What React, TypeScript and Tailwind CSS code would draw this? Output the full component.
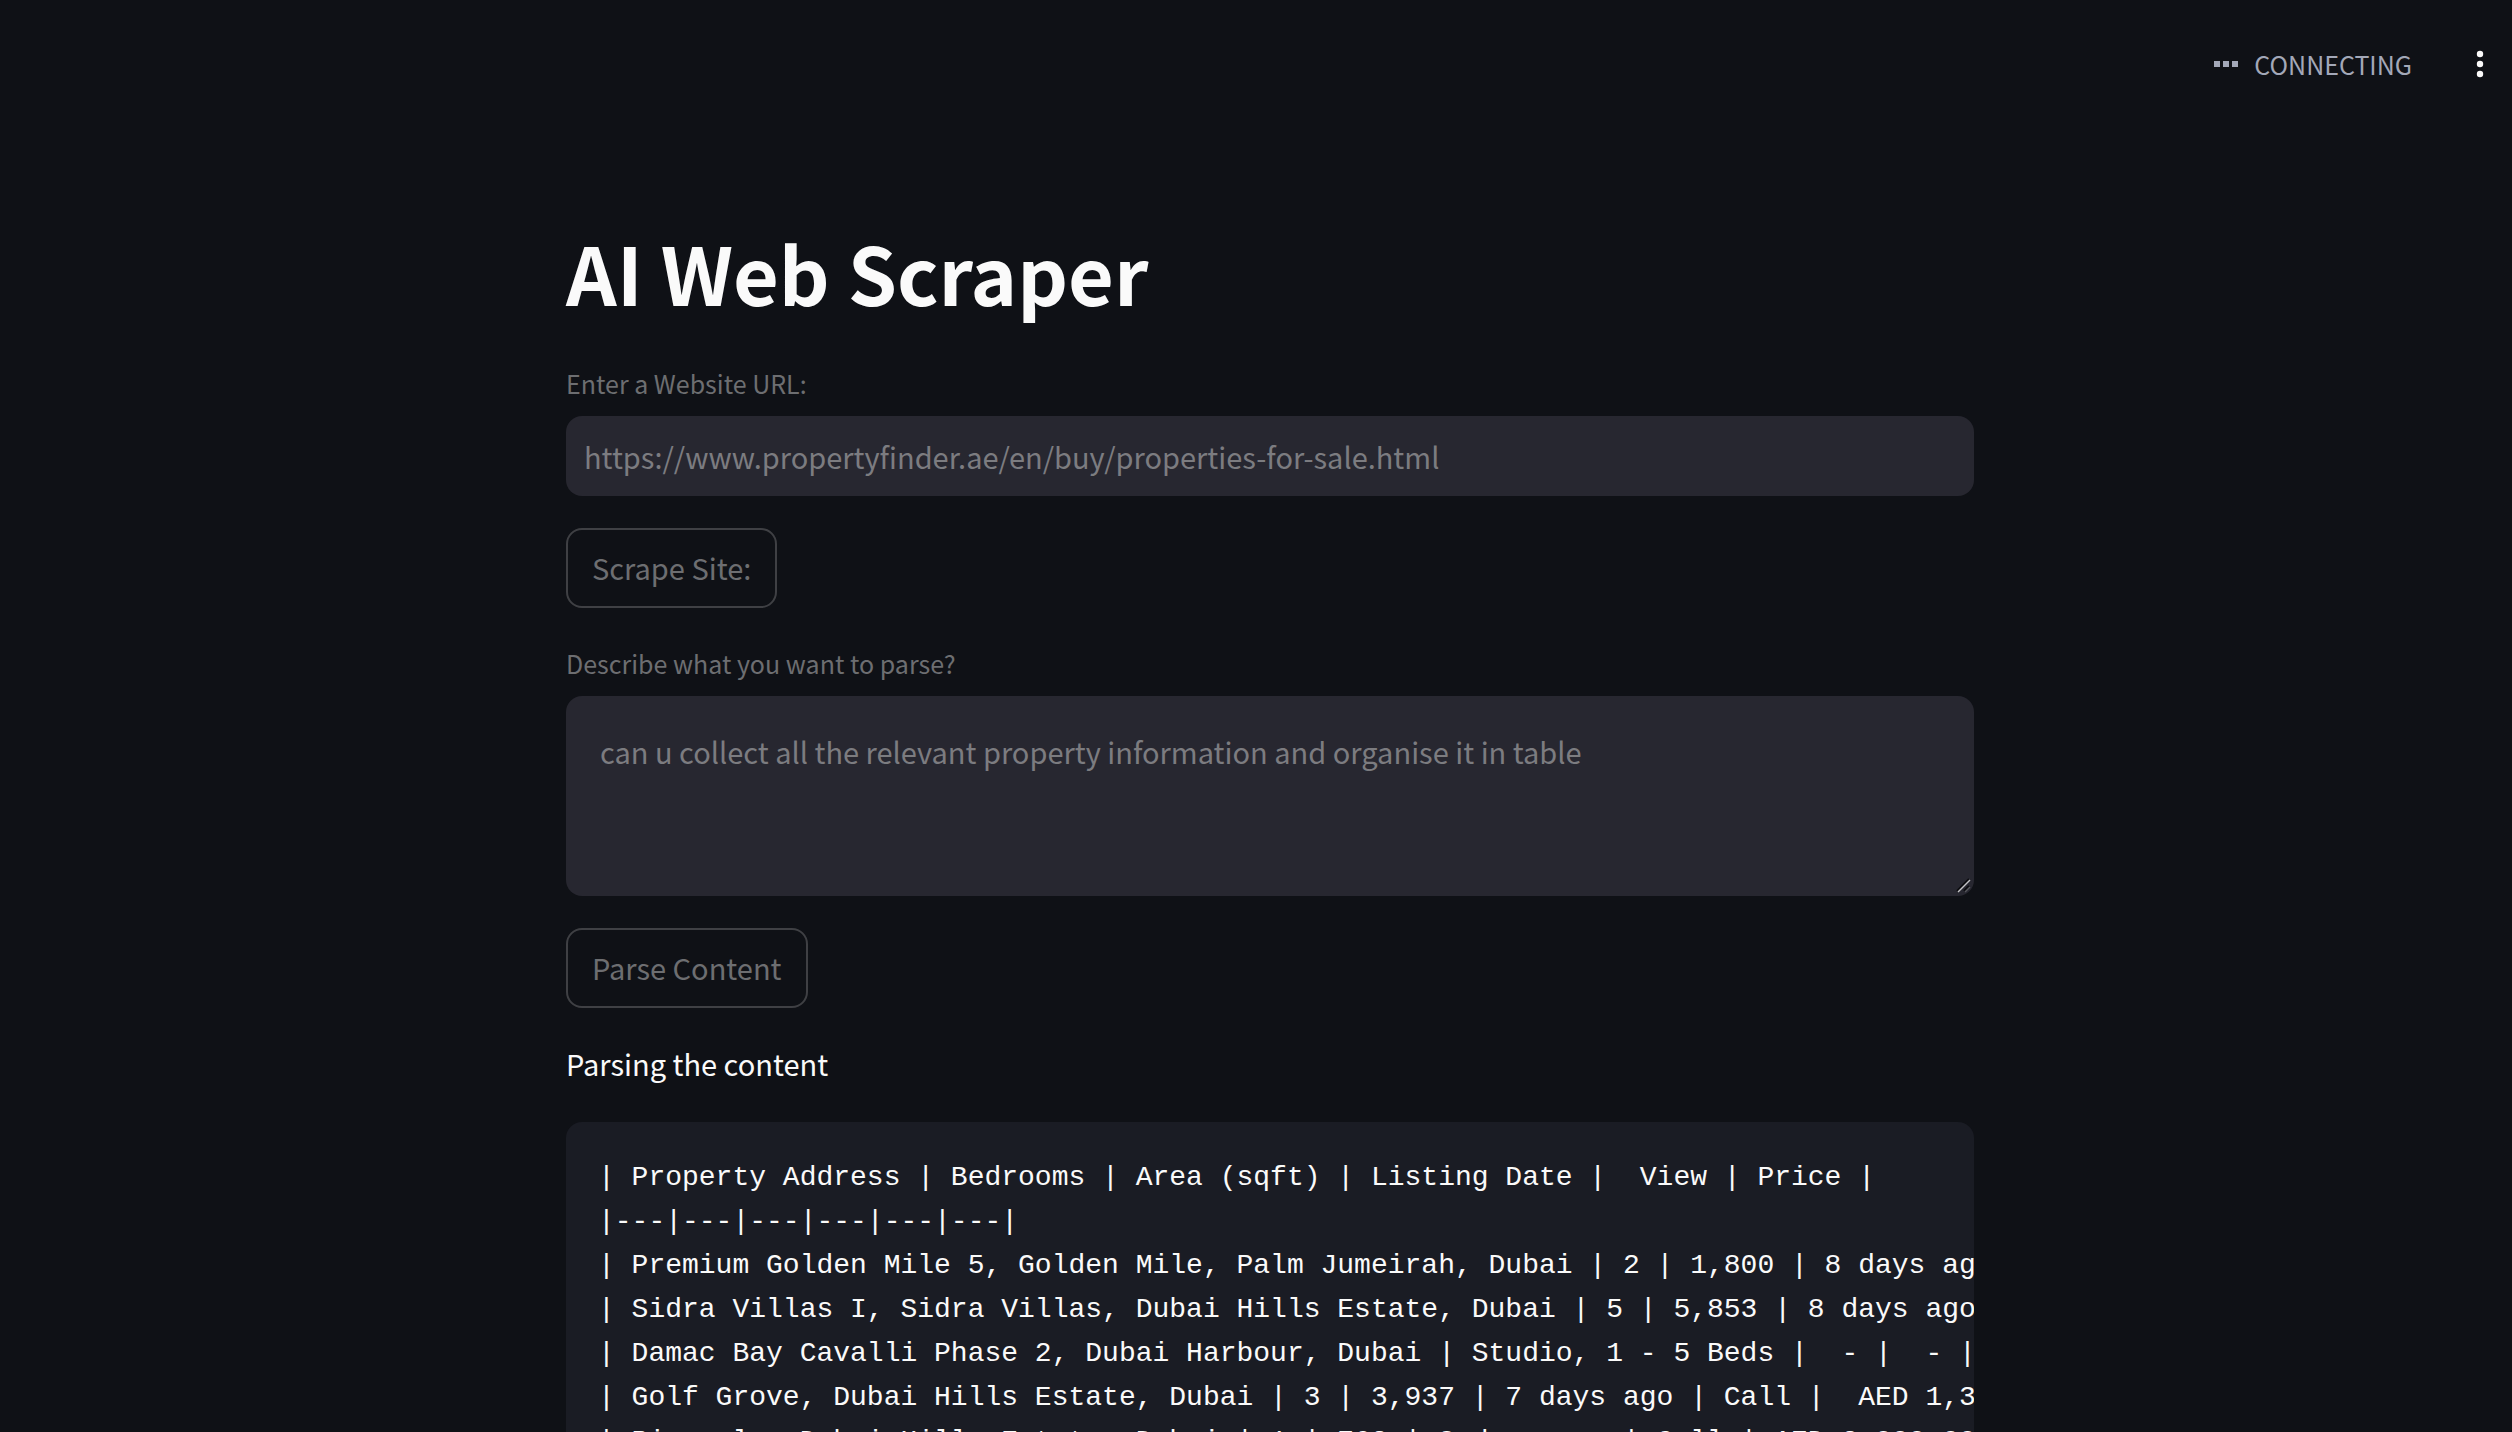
import type { ReactNode } from 'react';

const output = `| Property Address | Bedrooms | Area (sqft) | Listing Date |  View | Price |
|---|---|---|---|---|---|
| Premium Golden Mile 5, Golden Mile, Palm Jumeirah, Dubai | 2 | 1,800 | 8 days ago | Call |
| Sidra Villas I, Sidra Villas, Dubai Hills Estate, Dubai | 5 | 5,853 | 8 days ago | Call |
| Damac Bay Cavalli Phase 2, Dubai Harbour, Dubai | Studio, 1 - 5 Beds |  - |  - |
| Golf Grove, Dubai Hills Estate, Dubai | 3 | 3,937 | 7 days ago | Call |  AED 1,300,000 |
| Pinnacle, Dubai Hills Estate, Dubai | 1 | 762 | 8 days ago | Call | AED 2,000,000 |`;

function StatusBar() {
  return (
    <header className="flex h-32 shrink-0 items-center justify-end gap-12 pr-3">
      <div className="flex items-center gap-4 text-[25px] leading-10 text-[#a3a8b8]">
        <span className="flex gap-[3px]" aria-hidden="true">
          <i className="size-1.5 bg-current" />
          <i className="size-1.5 bg-current" />
          <i className="size-1.5 bg-current" />
        </span>
        <span>CONNECTING</span>
      </div>
      <button type="button" aria-label="Main menu" className="flex h-12 w-10 items-center justify-center text-[#fafafa]">
        <svg viewBox="0 0 8 28" className="h-7 w-2" fill="currentColor">
          <circle cx="4" cy="4" r="3.2" />
          <circle cx="4" cy="14" r="3.2" />
          <circle cx="4" cy="24" r="3.2" />
        </svg>
      </button>
    </header>
  );
}

function Field({ id, label, children }: { id: string; label: string; children: ReactNode }) {
  return (
    <div className="flex shrink-0 flex-col gap-2.5">
      <label htmlFor={id} className="text-[25px] leading-[46px] text-[#6d6e71]">
        {label}
      </label>
      {children}
    </div>
  );
}

function OutlineButton({ children }: { children: ReactNode }) {
  return (
    <button
      type="button"
      disabled
      className="h-20 shrink-0 self-start rounded-2xl border-2 border-[#3f4044] px-6 text-[29px] text-[#6d6e71]"
    >
      {children}
    </button>
  );
}

export default function App() {
  return (
    <div className='flex h-screen flex-col overflow-hidden bg-[#0f1116] font-["Noto_Sans_CJK_SC",sans-serif] text-[#fafafa]'>
      <StatusBar />
      <div className="flex min-h-0 grow justify-center pt-[88px] pl-7">
        <main className="flex w-full max-w-[1408px] flex-col gap-8">
          <h1 className="text-[79px] leading-[112px] font-bold">AI Web Scraper</h1>

          <Field id="url" label="Enter a Website URL:">
            <input
              id="url"
              type="text"
              disabled
              defaultValue="https://www.propertyfinder.ae/en/buy/properties-for-sale.html"
              className="h-20 w-full rounded-2xl border-2 border-transparent bg-[#272730] px-4 text-[29px] text-[#7c7c80]"
            />
          </Field>

          <OutlineButton>Scrape Site:</OutlineButton>

          <Field id="prompt" label="Describe what you want to parse?">
            <div className="relative">
              <textarea
                id="prompt"
                disabled
                defaultValue="can u collect all the relevant property information and organise it in table"
                className="block h-[200px] w-full resize-none rounded-2xl border-2 border-transparent bg-[#272730] px-8 py-[30px] text-[29px] leading-[46px] text-[#7c7c80]"
              />
              <svg viewBox="0 0 16 16" className="absolute right-0.5 bottom-0.5 size-4" fill="none" aria-hidden="true">
                <path d="M1 13 13 1M8 13l5-5" stroke="#0c0c10" strokeWidth="2" />
                <path d="M2 14 14 2" stroke="#c4c4c6" strokeWidth="1.5" />
                <path d="M9 14l5-5" stroke="#55565b" strokeWidth="1.5" />
              </svg>
            </div>
          </Field>

          <OutlineButton>Parse Content</OutlineButton>

          <p className="shrink-0 pb-1 text-[29px] leading-[46px]">Parsing the content</p>

          <pre className='shrink-0 overflow-hidden rounded-2xl bg-[#1a1c24] px-8 py-[34px] font-["Liberation_Mono",monospace] text-[28px] leading-[44px]'>
            <code className="font-[inherit]">{output}</code>
          </pre>
        </main>
      </div>
    </div>
  );
}
